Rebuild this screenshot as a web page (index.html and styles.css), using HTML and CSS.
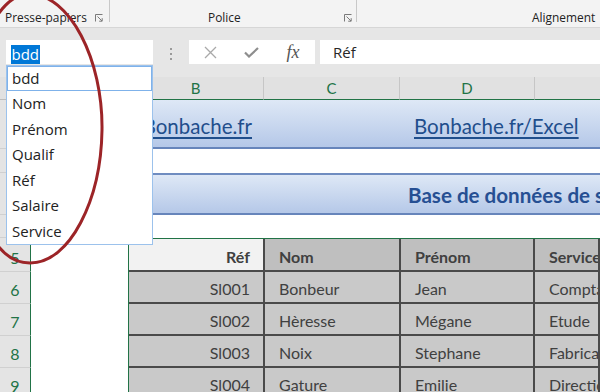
FILE: index.html
```html
<!DOCTYPE html>
<html lang="fr">
<head>
<meta charset="utf-8">
<title>Excel - bdd</title>
<link rel="stylesheet" href="styles.css">
</head>
<body>
<div class="app">
  <div class="ribbon">
    <div class="grp g1"><span class="lbl">Presse-papiers</span>
      <svg class="launch" viewBox="0 0 8 8"><path d="M0.5 7.5V0.5H7.5" fill="none" stroke="#7a7a7a"/><path d="M2.5 2.5L7 7M7.2 4.2V7.2H4.2" fill="none" stroke="#7a7a7a"/></svg>
    </div>
    <div class="grp g2"><span class="lbl">Police</span>
      <svg class="launch" viewBox="0 0 8 8"><path d="M0.5 7.5V0.5H7.5" fill="none" stroke="#7a7a7a"/><path d="M2.5 2.5L7 7M7.2 4.2V7.2H4.2" fill="none" stroke="#7a7a7a"/></svg>
    </div>
    <div class="grp g3"><span class="lbl">Alignement</span></div>
  </div>

  <div class="fbar">
    <div class="namebox"><span class="sel">bdd</span></div>
    <div class="grip"><i></i><i></i><i></i></div>
    <div class="fbtns">
      <span class="slot s1"><svg width="13" height="13" viewBox="0 0 13 13"><path d="M1 1L12 12M12 1L1 12" stroke="#a9a9a9" stroke-width="1.3"/></svg></span>
      <span class="slot s2"><svg width="15" height="11" viewBox="0 0 15 11"><path d="M1 5.5L5 9.5L14 1" fill="none" stroke="#8e8e8e" stroke-width="2.2"/></svg></span>
      <span class="slot s3"><span class="fx">fx</span></span>
    </div>
    <div class="finput">Réf</div>
  </div>

  <div class="sheet">
    <div class="colhdr">
      <div class="ch corner"></div>
      <div class="ch ca">A</div>
      <div class="ch cb on">B</div>
      <div class="ch cc on">C</div>
      <div class="ch cd on">D</div>
      <div class="ch ce on"></div>
    </div>

    <div class="r r1">
      <div class="rh">1</div>
      <div class="ca"></div>
      <div class="ban ban1">
        <span class="lnk l1">Bonbache.fr</span>
        <span class="lnk l2">Bonbache.fr/Excel</span>
      </div>
    </div>
    <div class="r r2">
      <div class="rh">2</div>
      <div class="ca"></div>
      <div class="blank"></div>
    </div>
    <div class="r r3">
      <div class="rh">3</div>
      <div class="ca"></div>
      <div class="ban ban3"><span class="title">Base de données de salariés</span></div>
    </div>
    <div class="r r4">
      <div class="rh">4</div>
      <div class="ca"></div>
      <div class="blank"></div>
    </div>

    <div class="r tr thead">
      <div class="rh on">5</div>
      <div class="ca"></div>
      <div class="tcells">
        <div class="td ref hd0">Réf</div>
        <div class="td hd">Nom</div>
        <div class="td hd">Prénom</div>
        <div class="td hd">Service</div>
      </div>
    </div>
    <div class="r tr">
      <div class="rh on">6</div>
      <div class="ca"></div>
      <div class="tcells">
        <div class="td ref">Sl001</div>
        <div class="td">Bonbeur</div>
        <div class="td">Jean</div>
        <div class="td">Comptabilité</div>
      </div>
    </div>
    <div class="r tr">
      <div class="rh on">7</div>
      <div class="ca"></div>
      <div class="tcells">
        <div class="td ref">Sl002</div>
        <div class="td">Hèresse</div>
        <div class="td">Mégane</div>
        <div class="td">Etude</div>
      </div>
    </div>
    <div class="r tr">
      <div class="rh on">8</div>
      <div class="ca"></div>
      <div class="tcells">
        <div class="td ref">Sl003</div>
        <div class="td">Noix</div>
        <div class="td">Stephane</div>
        <div class="td">Fabrication</div>
      </div>
    </div>
    <div class="r tr">
      <div class="rh on">9</div>
      <div class="ca"></div>
      <div class="tcells">
        <div class="td ref">Sl004</div>
        <div class="td">Gature</div>
        <div class="td">Emilie</div>
        <div class="td">Direction</div>
      </div>
    </div>
  </div>

  <div class="dd">
    <div class="it cur">bdd</div>
    <div class="it">Nom</div>
    <div class="it">Prénom</div>
    <div class="it">Qualif</div>
    <div class="it">Réf</div>
    <div class="it">Salaire</div>
    <div class="it">Service</div>
  </div>

  <svg class="ring" width="600" height="392" viewBox="0 0 600 392">
    <path d="M29,-6 C70,-6 103,60 102,130 C101,200 70,263 30,263 C-10,263 -30,200 -30,128 C-30,60 -5,-6 29,-6 Z" fill="none" stroke="#9c2427" stroke-width="3"/>
  </svg>
</div>
</body>
</html>
```

FILE: styles.css
```css
* { box-sizing: border-box; }

body {
  margin: 0;
  width: 600px;
  height: 392px;
  overflow: hidden;
  background: #fff;
  font-family: "Open Sans", "Noto Sans", sans-serif;
}

.app {
  position: relative;
  width: 600px;
  height: 392px;
  overflow: hidden;
}

/* ribbon */
.ribbon {
  height: 28px;
  background: #f3f3f3;
  border-bottom: 1px solid #d6d6d6;
  display: flex;
  align-items: flex-start;
}
.grp {
  height: 22px;
  display: flex;
  align-items: flex-start;
  padding-top: 9px;
  border-right: 1px solid #c8c8c8;
  font-size: 11.9px;
  line-height: 16px;
  color: #222;
  white-space: nowrap;
}
.g1 { width: 110px; padding-left: 5px; }
.g2 { width: 247px; padding-left: 98px; }
.g3 { flex: 1; border-right: none; padding-left: 175px; }
.launch {
  flex: none;
  width: 8px;
  height: 8px;
  margin-top: 5px;
  margin-left: auto;
}
.g1 .launch { margin-right: 6px; }
.g2 .launch { margin-right: 4px; }

/* formula bar */
.fbar {
  height: 49px;
  background: #e6e6e6;
  display: flex;
  align-items: flex-start;
  padding-top: 12px;
}
.namebox {
  margin-left: 6px;
  width: 147px;
  height: 24px;
  background: #fff;
  padding: 3px 0 0 5px;
}
.namebox .sel {
  display: inline-block;
  height: 19px;
  line-height: 19px;
  padding: 0 0.5px;
  background: #0078d7;
  color: #fff;
  font-size: 15px;
}
.grip {
  width: 36px;
  display: flex;
  flex-direction: column;
  align-items: center;
  gap: 3px;
  padding-top: 8px;
}
.grip i {
  display: block;
  width: 2px;
  height: 2px;
  background: #9a9a9a;
}
.fbtns {
  width: 126px;
  height: 24px;
  background: #fff;
  display: flex;
  align-items: center;
}
.slot { display: flex; justify-content: center; align-items: center; height: 24px; }
.s1 { width: 42px; }
.s2 { width: 40px; }
.s3 { width: 44px; }
.fx {
  font-family: "Liberation Serif", serif;
  font-style: italic;
  font-size: 18px;
  color: #555;
  line-height: 20px;
}
.finput {
  flex: 1;
  margin-left: 5px;
  height: 24px;
  background: #fff;
  padding-left: 13px;
  font-size: 15px;
  line-height: 24px;
  color: #262626;
}

/* sheet */
.colhdr {
  display: flex;
  height: 23px;
  background: #e1e1e1;
}
.ch {
  height: 23px;
  border-right: 1px solid #c6c6c6;
  border-bottom: 1px solid #bdbdbd;
  text-align: center;
  font-family: "Lato", sans-serif;
  font-size: 15px;
  line-height: 23px;
  color: #444;
}
.ch.on { color: #217346; border-bottom-color: #217346; }
.corner { width: 31px; }
.ch.ca { width: 97px; }
.cb { width: 136px; }
.cc { width: 136px; }
.cd { width: 135px; }
.ce { flex: 1; border-right: none; }

.r { display: flex; }
.rh {
  width: 31px;
  flex: none;
  background: #e4e4e4;
  border-right: 1px solid #c6c6c6;
  border-bottom: 1px solid #d0d0d0;
  display: flex;
  align-items: flex-end;
  justify-content: center;
  padding-bottom: 4px;
  font-family: "Lato", sans-serif;
  font-size: 16px;
  line-height: 18px;
  color: #444;
}
.rh.on { color: #217346; border-right-color: #217346; }
.ca { width: 97px; flex: none; background: #fff; }
.blank { flex: 1; background: #fff; }

.r1 { height: 49px; }
.r2 { height: 24px; }
.r3 { height: 42px; }
.r4 { height: 23px; }

.ban {
  flex: 1;
  display: flex;
  align-items: center;
  background: linear-gradient(#dee8f6, #b5c8e8);
  white-space: nowrap;
  overflow: hidden;
}
.ban1 { border-bottom: 2px solid #6785bb; padding-top: 5px; }
.ban3 { border-top: 2px solid #6f8cc0; border-bottom: 2px solid #6785bb; padding-left: 280px; padding-top: 2px; }
.lnk {
  font-family: "Lato", sans-serif;
  font-size: 20.5px;
  color: #1f4e8c;
  text-decoration: underline;
  text-underline-offset: 3px;
}
.l1 { width: 124px; text-align: right; flex: none; }
.l2 { padding-left: 162px; }
.title {
  font-family: "Lato", sans-serif;
  font-weight: 700;
  font-size: 20.6px;
  color: #264f93;
}

/* table */
.tr { height: 32px; }
.thead { height: 34px; }
.tcells {
  flex: 1;
  display: grid;
  grid-template-columns: 136px 136px 134px 1fr;
  border-left: 1px solid #217346;
}
.thead .tcells { border-top: 1px solid #217346; }
.td {
  background: #c9c9c9;
  border-right: 2px solid #4a4a4a;
  border-bottom: 2px solid #4a4a4a;
  display: flex;
  align-items: center;
  padding: 3px 0 0 14px;
  font-family: "Lato", sans-serif;
  font-size: 16px;
  color: #404040;
  white-space: nowrap;
  overflow: hidden;
}
.td.ref { justify-content: flex-end; padding-left: 0; padding-right: 13px; }
.hd { background: #bfbfbf; font-weight: 700; }
.hd0 { background: #f2f2f2; font-weight: 700; }

/* dropdown overlay */
.dd {
  position: absolute;
  left: 6px;
  top: 65px;
  width: 147px;
  height: 180px;
  background: #fff;
  border: 1px solid #9cc2ec;
}
.it {
  height: 25.6px;
  line-height: 25.6px;
  padding-left: 5px;
  font-size: 15px;
  color: #222;
}
.it.cur {
  height: 25px;
  line-height: 25px;
  box-shadow: inset 0 0 0 1px #7fb2ea;
}

.ring {
  position: absolute;
  left: 0;
  top: 0;
  pointer-events: none;
}
```
